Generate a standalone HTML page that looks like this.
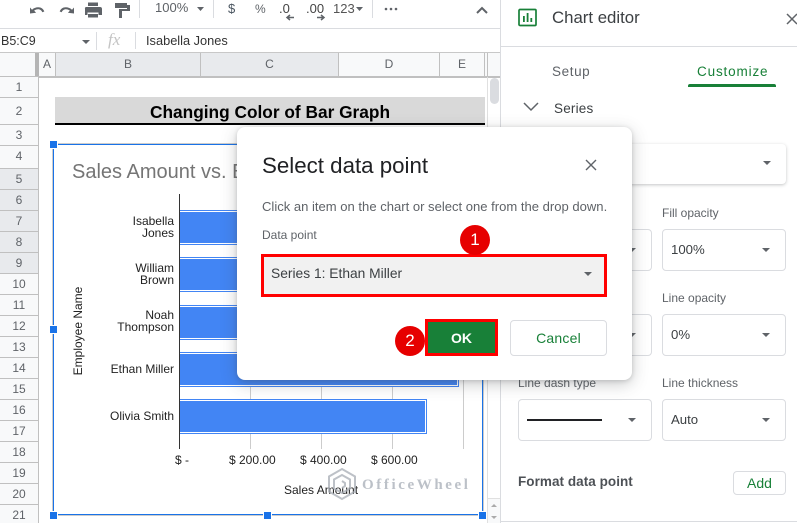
<!DOCTYPE html>
<html><head><meta charset="utf-8">
<style>
html,body{margin:0;padding:0;background:#fff}
#p{position:relative;width:797px;height:523px;overflow:hidden;background:#fff;font-family:"Liberation Sans",sans-serif;color:#3c4043}
.a{position:absolute;white-space:nowrap}
.r{position:absolute;left:0;width:38px;background:#f8f9fa;border-bottom:1px solid #c0c0c0;text-align:center;font-size:12px;color:#5f6368;box-sizing:border-box}
.c{position:absolute;top:53px;height:24px;box-sizing:border-box;border-right:1px solid #c0c0c0;text-align:center;font-size:12px;line-height:23px;color:#5f6368;background:#f8f9fa}
.h{position:absolute;width:7px;height:7px;background:#1a73e8;outline:1.5px solid #fff}
.b{position:absolute;left:180px;height:31px;background:#4285f4;outline:1px solid #fff;box-shadow:0 0 0 2px #4285f4;clip-path:inset(-4px -4px -4px 0)}
.g{position:absolute;top:194px;height:255px;width:1px;background:#ccc}
.lb{position:absolute;font-size:12px;color:#222;text-align:right;right:623px;line-height:12px;white-space:nowrap}
.tk{position:absolute;top:453px;font-size:12px;color:#222;white-space:nowrap}
.f{position:absolute;box-sizing:border-box;border:1px solid #dadce0;border-radius:4px;background:#fff;height:42px}
.l{position:absolute;font-size:12px;color:#5f6368;white-space:nowrap}
.t{position:absolute;width:0;height:0;border-left:4.5px solid transparent;border-right:4.5px solid transparent;border-top:4.5px solid #5f6368}
.v{position:absolute;font-size:13.200px;color:#3c4043;white-space:nowrap}
</style></head><body><div id="p">

<!-- toolbar -->
<svg class="a" style="left:0;top:0" width="500" height="29" fill="none">
<path d="M30 12.500V6.500l2 2.200C34 7 36 6.300 38.200 6.300c2.900 0 5.200 1.700 6.100 4.200l-2 .7c-.7-1.800-2.200-3-4.200-3-1.500 0-2.900.6-4 1.400l2 2.100z" fill="#5f6368" transform="translate(0 1)"/>
<path d="M74 12.500V6.500l-2 2.200C70 7 68 6.300 65.800 6.300c-2.900 0-5.200 1.700-6.100 4.200l2 .7c.7-1.800 2.200-3 4.200-3 1.500 0 2.900.6 4 1.400l-2 2.100z" fill="#5f6368" transform="translate(0 1)"/>
<path d="M88 2.500h10v3.500H88zM86 7h14a2 2 0 0 1 2 2v6h-3.500v-2.500h-11V15H85V9a1.500 1.500 0 0 1 1-2zM88 14h10v3.500H88z" fill="#5f6368"/>
<path d="M115 3h12v5h-12zM127 5h3v6h-8v7h-3v-9h8z" fill="#5f6368"/>
<path d="M139.500 0v18M213.500 0v18M372.500 0v18" stroke="#dadce0"/>
<path d="M197 7l3.500 4 3.500-4z" fill="#5f6368"/>
<path d="M356 7l3.500 4 3.500-4z" fill="#5f6368"/>
<path d="M287 17.500h7M290 15l-3 2.500 3 2.500" stroke="#5f6368" stroke-width="1.500"/>
<path d="M317 17.500h7M321 15l3 2.500-3 2.500" stroke="#5f6368" stroke-width="1.500"/>
<circle cx="386" cy="9" r="1.300" fill="#5f6368"/><circle cx="391" cy="9" r="1.300" fill="#5f6368"/><circle cx="396" cy="9" r="1.300" fill="#5f6368"/>
<path d="M477 13l5-5 5 5" stroke="#5f6368" stroke-width="2"/>
</svg>
<div class="a" style="left:155px;top:0;font-size:13px;line-height:16px;color:#5f6368">100%</div>
<div class="a" style="left:228px;top:0;font-size:13px;line-height:17px;color:#4a5560">$</div>
<div class="a" style="left:255px;top:1px;font-size:12px;line-height:16px;color:#5f6368">%</div>
<div class="a" style="left:279px;top:1px;font-size:13px;line-height:16px;color:#444">.0</div>
<div class="a" style="left:306px;top:1px;font-size:13px;line-height:16px;color:#444">.00</div>
<div class="a" style="left:333px;top:1px;font-size:13px;line-height:16px;color:#555">123</div>
<div class="a" style="left:0;top:28px;width:500px;height:1px;background:#dadce0"></div>

<!-- formula bar -->
<div class="a" style="left:1px;top:32px;font-size:12.500px;line-height:18px;color:#333">B5:C9</div>
<div class="t" style="left:82px;top:40px;border-left-width:4px;border-right-width:4px;border-top-width:4px"></div>
<div class="a" style="left:96px;top:32px;width:1px;height:18px;background:#dadce0"></div>
<div class="a" style="left:108px;top:27px;font:italic 17px/26px 'Liberation Serif',serif;color:#c4c4c4">fx</div>
<div class="a" style="left:135px;top:32px;width:1px;height:17px;background:#dadce0"></div>
<div class="a" style="left:146px;top:32px;font-size:12.800px;line-height:18px;color:#333">Isabella Jones</div>
<div class="a" style="left:0;top:52px;width:500px;height:1px;background:#c8c8c8"></div>

<!-- headers -->
<div class="a" style="left:0;top:53px;width:35px;height:24px;background:#f8f9fa"></div>
<div class="a" style="left:35px;top:53px;width:4px;height:24px;background:#b5b5b5"></div>
<div class="c" style="left:39px;width:17px">A</div>
<div class="c" style="left:56px;width:145px;background:#e8eaed">B</div>
<div class="c" style="left:201px;width:138px;background:#e8eaed">C</div>
<div class="c" style="left:339px;width:101px">D</div>
<div class="c" style="left:440px;width:45px">E</div>
<div class="c" style="left:485px;width:3px"></div>
<div class="c" style="left:488px;width:12px;border-right:0"></div>
<div class="a" style="left:0;top:76px;width:500px;height:1.500px;background:#c0c0c0"></div>
<div class="a" style="left:38px;top:77px;width:1px;height:446px;background:#c0c0c0"></div>

<div class="r" style="top:77px;height:21px;line-height:20px">1</div>
<div class="r" style="top:98px;height:27px;line-height:26px">2</div>
<div class="r" style="top:125px;height:21px;line-height:20px">3</div>
<div class="r" style="top:146px;height:23px;line-height:21px">4</div>
<div class="r" style="top:169px;height:21px;line-height:20px;background:#e8eaed">5</div>
<div class="r" style="top:190px;height:21px;line-height:20px;background:#e8eaed">6</div>
<div class="r" style="top:211px;height:21px;line-height:20px;background:#e8eaed">7</div>
<div class="r" style="top:232px;height:21px;line-height:20px;background:#e8eaed">8</div>
<div class="r" style="top:253px;height:21px;line-height:20px;background:#e8eaed">9</div>
<div class="r" style="top:274px;height:21px;line-height:20px">10</div>
<div class="r" style="top:295px;height:21px;line-height:20px">11</div>
<div class="r" style="top:316px;height:21px;line-height:20px">12</div>
<div class="r" style="top:337px;height:21px;line-height:20px">13</div>
<div class="r" style="top:358px;height:21px;line-height:20px">14</div>
<div class="r" style="top:379px;height:21px;line-height:20px">15</div>
<div class="r" style="top:400px;height:21px;line-height:20px">16</div>
<div class="r" style="top:421px;height:21px;line-height:20px">17</div>
<div class="r" style="top:442px;height:21px;line-height:20px">18</div>
<div class="r" style="top:463px;height:21px;line-height:20px">19</div>
<div class="r" style="top:484px;height:21px;line-height:20px">20</div>
<div class="r" style="top:505px;height:21px;line-height:20px">21</div>

<!-- title cell -->
<div class="a" style="left:55px;top:97px;width:430px;height:26px;background:#d9d9d9;text-align:center;font-weight:bold;font-size:17.300px;line-height:30px;color:#000">Changing Color of Bar Graph</div>
<div class="a" style="left:55px;top:123px;width:430px;height:2px;background:#000"></div>

<!-- scrollbar -->
<div class="a" style="left:487px;top:77px;width:1px;height:446px;background:#e0e0e0"></div>
<div class="a" style="left:490px;top:78px;width:9px;height:26px;border-radius:5px;background:#dadce0"></div>
<div class="a" style="left:488px;top:498px;width:12px;height:25px;background:#f8f9fa;border-top:1px solid #e0e0e0;box-sizing:border-box"></div>
<svg class="a" style="left:488px;top:499px" width="12" height="24"><path d="M3 8l3-3 3 3z" fill="#aaa"/><path d="M3 17l3 3 3-3z" fill="#aaa"/></svg>

<!-- chart -->
<div class="a" style="left:53px;top:144px;width:430px;height:371px;box-sizing:border-box;border:1.500px solid #1a73e8;box-shadow:0 0 0 .5px #999;background:#fff"></div>
<div class="a" style="left:72px;top:158px;font-size:20px;line-height:28px;color:#757575">Sales Amount vs. Employee Name</div>
<div class="g" style="left:250px"></div><div class="g" style="left:321px"></div><div class="g" style="left:392px"></div><div class="g" style="left:463px"></div>
<div class="b" style="top:212px;width:280px"></div>
<div class="b" style="top:259px;width:280px"></div>
<div class="b" style="top:307px;width:280px"></div>
<div class="b" style="top:354px;width:277px"></div>
<div class="b" style="top:401px;width:245px"></div>
<div class="a" style="left:179px;top:194px;width:1px;height:255px;background:#333"></div>
<div class="lb" style="top:215px">Isabella<br>Jones</div>
<div class="lb" style="top:262px">William<br>Brown</div>
<div class="lb" style="top:309px">Noah<br>Thompson</div>
<div class="lb" style="top:363px">Ethan Miller</div>
<div class="lb" style="top:410px">Olivia Smith</div>
<div class="a" style="left:18px;top:323px;width:120px;text-align:center;font-size:12px;line-height:16px;color:#222;transform:rotate(-90deg)">Employee Name</div>
<div class="tk" style="left:175px">$ -</div>
<div class="tk" style="left:229px">$ 200.00</div>
<div class="tk" style="left:300px">$ 400.00</div>
<div class="tk" style="left:371px">$ 600.00</div>
<div class="a" style="left:284px;top:482px;font-size:12px;line-height:16px;color:#222">Sales Amount</div>
<div class="h" style="left:50px;top:141px"></div>
<div class="h" style="left:50px;top:326px"></div>
<div class="h" style="left:50px;top:512px"></div>
<div class="h" style="left:264px;top:512px"></div>
<div class="h" style="left:479px;top:512px"></div>

<!-- watermark -->
<svg class="a" style="left:328px;top:466px" width="36" height="36" fill="none" stroke="#a8adb5" stroke-width="2" opacity=".75"><path d="M14 3l13 7.500v15L14 33 1 25.500v-15z"/><path d="M14 9l8 4.500v9L14 27l-8-4.500v-9z"/><path d="M14 15l3 2v3l-3 2"/></svg>
<div class="a" style="left:362px;top:476px;font:bold 15px/18px 'Liberation Serif',serif;letter-spacing:2.600px;color:#bcc1c8">OfficeWheel</div>

<!-- right panel -->
<div class="a" style="left:500px;top:0;width:297px;height:523px;background:#fff;border-left:1px solid #dadce0;box-sizing:border-box"></div>
<svg class="a" style="left:518px;top:8px" width="20" height="20" fill="none"><rect x="1" y="1.500" width="17" height="16" rx="1" stroke="#188038" stroke-width="1.700"/><path d="M5 8h1.800v6H5zM8.700 5h1.800v9H8.700zM12.400 10h1.800v4h-1.800z" fill="#188038"/></svg>
<div class="a" style="left:552px;top:7px;font-size:16.800px;line-height:21px;color:#3c4043">Chart editor</div>
<svg class="a" style="left:785px;top:12px" width="12" height="14" fill="none"><path d="M2 2l10 10M12 2L2 12" stroke="#5f6368" stroke-width="1.500"/></svg>
<div class="a" style="left:501px;top:46px;width:296px;height:1px;background:#dadce0"></div>
<div class="a" style="left:552px;top:63px;font-size:13.500px;line-height:18px;color:#5f6368;letter-spacing:.6px">Setup</div>
<div class="a" style="left:697px;top:63px;font-size:13.500px;line-height:18px;color:#188038;letter-spacing:.85px">Customize</div>
<div class="a" style="left:688px;top:84px;width:88px;height:3px;border-radius:2px 2px 0 0;background:#188038"></div>
<svg class="a" style="left:522px;top:101px" width="18" height="12" fill="none"><path d="M2 2l7 7 7-7" stroke="#5f6368" stroke-width="1.500"/></svg>
<div class="a" style="left:554px;top:100px;font-size:13.500px;line-height:18px;color:#3c4043;letter-spacing:.2px">Series</div>

<div class="a" style="left:560px;top:144px;width:226px;height:40px;border-radius:4px;background:#fff;box-shadow:0 1px 3px rgba(60,64,67,.3)"></div>
<div class="t" style="left:763px;top:161px"></div>

<div class="l" style="left:662px;top:205px;line-height:16px">Fill opacity</div>
<div class="f" style="left:560px;top:229px;width:92px"></div><div class="t" style="left:628px;top:248px"></div>
<div class="f" style="left:662px;top:229px;width:124px"></div><div class="t" style="left:762px;top:248px"></div>
<div class="v" style="left:671px;top:241px;line-height:18px">100%</div>

<div class="l" style="left:662px;top:290px;line-height:16px">Line opacity</div>
<div class="f" style="left:560px;top:314px;width:92px"></div><div class="t" style="left:628px;top:333px"></div>
<div class="f" style="left:662px;top:314px;width:124px"></div><div class="t" style="left:762px;top:333px"></div>
<div class="v" style="left:671px;top:326px;line-height:18px">0%</div>

<div class="l" style="left:518px;top:375px;line-height:16px">Line dash type</div>
<div class="l" style="left:662px;top:375px;line-height:16px">Line thickness</div>
<div class="f" style="left:518px;top:399px;width:134px"></div>
<div class="a" style="left:527px;top:419px;width:75px;height:2px;background:#202124"></div>
<div class="t" style="left:628px;top:418px"></div>
<div class="f" style="left:662px;top:399px;width:124px"></div><div class="t" style="left:762px;top:418px"></div>
<div class="v" style="left:671px;top:411px;line-height:18px">Auto</div>

<div class="a" style="left:518px;top:473px;font-size:13.500px;font-weight:bold;line-height:18px;color:#4d5156;letter-spacing:.05px">Format data point</div>
<div class="a" style="left:733px;top:471px;width:53px;height:24px;box-sizing:border-box;border:1px solid #dadce0;border-radius:4px;text-align:center;font-size:14px;line-height:22px;color:#188038">Add</div>
<div class="a" style="left:501px;top:521px;width:296px;height:1px;background:#dadce0"></div>

<!-- dialog -->
<div class="a" style="left:237px;top:127px;width:395px;height:253px;border-radius:8px;background:#fff;box-shadow:0 4px 16px rgba(60,64,67,.28),0 1px 4px rgba(60,64,67,.2)"></div>
<div class="a" style="left:262px;top:152px;font-size:22.300px;line-height:28px;color:#202124">Select data point</div>
<svg class="a" style="left:584px;top:158px" width="14" height="14" fill="none"><path d="M2 2l10 10M12 2L2 12" stroke="#5f6368" stroke-width="1.400"/></svg>
<div class="a" style="left:262px;top:198px;font-size:13.050px;line-height:17px;color:#5f6368">Click an item on the chart or select one from the drop down.</div>
<div class="a" style="left:262px;top:227px;font-size:12px;line-height:16px;color:#5f6368">Data point</div>
<div class="a" style="left:261px;top:254px;width:346px;height:43px;box-sizing:border-box;border:3px solid #f00;background:#f1f1f1"></div>
<div class="a" style="left:271px;top:265px;font-size:13.800px;line-height:18px;color:#3c4043">Series 1: Ethan Miller</div>
<div class="t" style="left:584px;top:272px"></div>
<div class="a" style="left:425px;top:319px;width:73px;height:37px;box-sizing:border-box;border:3px solid #f00;background:#188038;text-align:center;font-size:14px;font-weight:bold;line-height:32px;color:#fff">OK</div>
<div class="a" style="left:510px;top:320px;width:97px;height:36px;box-sizing:border-box;border:1px solid #dadce0;border-radius:4px;background:#fff;text-align:center;font-size:14px;line-height:35px;color:#188038;letter-spacing:.2px">Cancel</div>
<div class="a" style="left:460px;top:225px;width:30px;height:30px;border-radius:50%;background:#e60000;text-align:center;font-size:17px;line-height:29px;color:#fff">1</div>
<div class="a" style="left:395px;top:326px;width:30px;height:30px;border-radius:50%;background:#e60000;text-align:center;font-size:17px;line-height:30px;color:#fff">2</div>
</div></body></html>
